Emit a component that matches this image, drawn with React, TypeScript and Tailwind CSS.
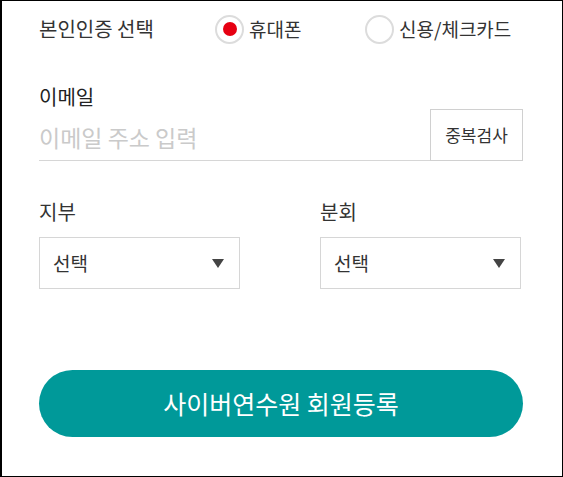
import React from "react";

function Radio({ checked, label, width }: { checked?: boolean; label: string; width: string }) {
  return (
    <label className={`flex items-center gap-[5px] ${width}`}>
      <span className="flex h-[29px] w-[29px] items-center justify-center rounded-full border-2 border-[#dcdcdc] bg-white">
        {checked && <span className="h-[14px] w-[14px] rounded-full bg-[#e60012]" />}
      </span>
      <span className="text-[19px] leading-[24px] text-[#333]">{label}</span>
    </label>
  );
}

function Select({ label }: { label: string }) {
  return (
    <div className="flex w-[201px] flex-col">
      <div className="text-[20px] leading-[24px] text-[#333]">{label}</div>
      <div className="mt-[13px] flex h-[52px] items-center justify-between border border-[#d6d6d6] bg-white pl-[13px] pr-[15px]">
        <span className="text-[19px] leading-[24px] text-[#333]">선택</span>
        <svg width="12" height="9" viewBox="0 0 12 9">
          <path d="M0 0 H12 L6 9 Z" fill="#444" />
        </svg>
      </div>
    </div>
  );
}

export default function App() {
  return (
    <div
      className="box-border h-[477px] w-[563px] border border-l-2 border-black bg-white pl-[37px] pr-[39px] pt-[8px]"
      style={{ fontFamily: '"Noto Sans CJK KR", "Noto Sans", sans-serif' }}
    >
      <div className="flex h-[40px] items-center">
        <div className="w-[176px] text-[20px] leading-[24px] text-[#333]">본인인증 선택</div>
        <Radio checked label="휴대폰" width="w-[150px]" />
        <Radio label="신용/체크카드" width="" />
      </div>

      <div className="mt-[36px] text-[20px] leading-[24px] text-[#222]">이메일</div>
      <div className="flex h-[52px]">
        <input
          className="min-w-0 flex-1 border-b border-[#d6d6d6] bg-transparent pt-[6px] text-[23px] text-[#333] outline-none placeholder:text-[#cacaca]"
          placeholder="이메일 주소 입력"
        />
        <button className="w-[93px] border border-[#d0d0d0] bg-white text-[17px] text-[#333]">중복검사</button>
      </div>

      <div className="mt-[39px] flex gap-[80px]">
        <Select label="지부" />
        <Select label="분회" />
      </div>

      <button className="mt-[81px] flex h-[67px] w-[484px] items-center justify-center rounded-full bg-[#009999] text-[25px] text-white">
        사이버연수원 회원등록
      </button>
    </div>
  );
}
